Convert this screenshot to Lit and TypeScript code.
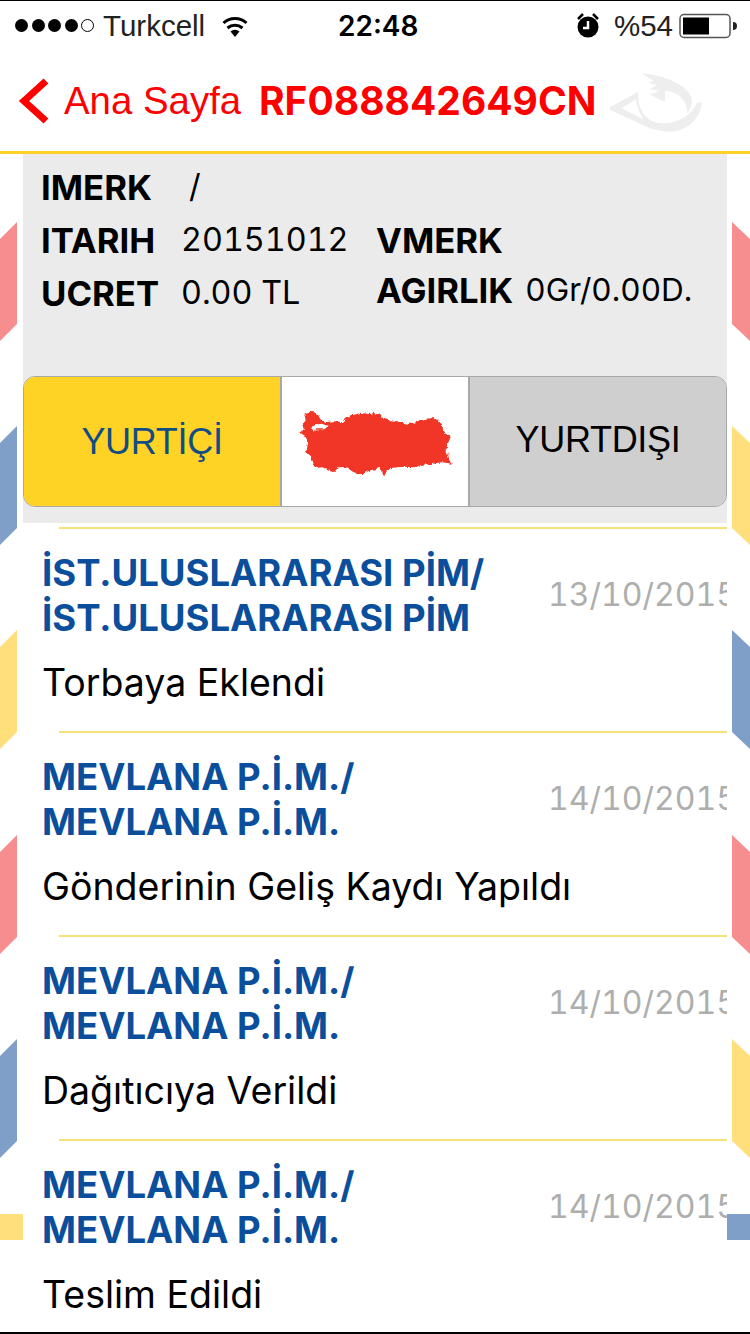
import { LitElement, html, css, svg } from "lit";
import { customElement } from "lit/decorators.js";

const RED = "#f68e8f", BLUE = "#7f9fc8", YEL = "#fedf7b";
const stripes = (x0: number, x1: number, colors: string[], rising: boolean) =>
  [222, 426, 630, 835, 1039].map((y, i) => {
    const a = rising ? y + 17 : y;
    const b = rising ? y : y + 17;
    return svg`<polygon fill=${colors[i]} points="${x0},${a} ${x1},${b} ${x1},${b + 102} ${x0},${a + 102}"></polygon>`;
  });

const rows = [
  ["İST.ULUSLARARASI PİM/", "İST.ULUSLARARASI PİM", "13/10/2015", "Torbaya Eklendi"],
  ["MEVLANA P.İ.M./", "MEVLANA P.İ.M.", "14/10/2015", "Gönderinin Geliş Kaydı Yapıldı"],
  ["MEVLANA P.İ.M./", "MEVLANA P.İ.M.", "14/10/2015", "Dağıtıcıya Verildi"],
  ["MEVLANA P.İ.M./", "MEVLANA P.İ.M.", "14/10/2015", "Teslim Edildi"],
];

@customElement("app-root")
export class AppRoot extends LitElement {
  static styles = css`
    :host { display: block; width: 750px; height: 1334px; position: relative; overflow: hidden; background: #fff; font-family: Inter, "Liberation Sans", sans-serif; color: #000; box-sizing: border-box; border-top: 1px solid #000; border-bottom: 2px solid #000; }
    .bg { position: absolute; left: 0; top: -1px; width: 750px; height: 1334px; }
    .content { position: relative; display: flex; flex-direction: column; height: 100%; }
    .content > * { flex: none; }
    .status { height: 49px; display: flex; align-items: center; padding: 0 13px 0 15px; font-family: "Liberation Sans", sans-serif; font-size: 29.500px; position: relative; }
    .dots { display: flex; gap: 3.500px; align-items: center; margin-right: 9px; }
    .dot { width: 13px; height: 13px; border-radius: 50%; background: #000; box-sizing: border-box; }
    .dot.off { background: transparent; border: 1.500px solid #000; }
    .carrier { color: #222; width: 118px; }
    .time { position: absolute; left: 338px; font-family: Inter, sans-serif; font-weight: 600; font-size: 28px; }
    .right { margin-left: auto; display: flex; align-items: center; gap: 14px; }
    .pct { color: #222; margin-right: -8px; }
    .nav { height: 101px; display: flex; align-items: center; padding-left: 18px; color: #fe0000; border-bottom: 3px solid #fad326; }
    .ana { font-family: "Liberation Sans", sans-serif; font-size: 38.400px; margin-left: 14px; width: 195px; white-space: nowrap; }
    .code { font-family: Inter, sans-serif; font-weight: 700; font-size: 39px; white-space: nowrap; width: 341px; }
    .logo { margin-top: -2px; }
    .panel { margin: 0 23px; height: 369px; background: #ebebeb; box-sizing: border-box; padding-top: 6px; display: flex; flex-direction: column; }
    .info { display: grid; grid-template-columns: 335px 1fr; height: 216px; padding-left: 18px; font-size: 32.300px; font-feature-settings: "tnum"; }
    .col { display: flex; flex-direction: column; }
    .line { height: 53px; display: flex; align-items: center; white-space: nowrap; }
    .rcol { padding-top: 53px; }
    .rcol .line:last-child { height: 47px; }
    b { font-weight: 700; font-size: 34.700px; }
    .k1 { width: 140px; }
    .small { font-size: 31.500px; margin-left: 12px; }
    .slash { margin-left: 8px; }
    .seg { height: 131px; flex: none; display: flex; border: 1px solid #a8a8a8; border-radius: 12px; overflow: hidden; box-sizing: border-box; font-family: "Liberation Sans", sans-serif; font-size: 36px; letter-spacing: -0.300px; }
    .seg > div { display: flex; align-items: center; justify-content: center; }
    .yt { width: 258px; background: #ffd226; color: #114d85; border-right: 2px solid #a8a8a8; box-sizing: border-box; }
    .map { width: 186px; background: #fff; box-sizing: border-box; padding-left: 2px; }
    .map svg { flex: none; }
    .yd { flex: 1; background: #cfcfcf; color: #000; border-left: 2px solid #a8a8a8; padding-bottom: 4px; }
    .list { margin: 4px 23px 0; display: flex; flex-direction: column; }
    .row { height: 204px; flex: none; box-sizing: border-box; background: #fff; position: relative; padding: 24px 0 0 19px; }
    .row::before { content: ""; position: absolute; left: 36px; right: 0; top: 0; height: 2px; background: #f5e07a; }
    .top { display: flex; align-items: center; justify-content: space-between; }
    .place { font-weight: 700; font-size: 36.500px; line-height: 45px; color: #0b4f9c; white-space: nowrap; }
    .date { font-size: 32px; font-feature-settings: "tnum"; color: #aeaeae; width: 179px; margin-top: -4px; overflow: hidden; white-space: nowrap; flex: none; }
    .event { font-size: 37.500px; line-height: 44px; margin-top: 20px; white-space: nowrap; }
  `;

  render() {
    return html`
      <svg class="bg" viewBox="0 0 750 1334" aria-hidden="true">
        ${stripes(0, 17, [RED, BLUE, YEL, RED, BLUE], true)}
        ${stripes(732, 750, [RED, YEL, BLUE, RED, YEL], false)}
        <rect x="0" y="1214" width="23" height="26" fill=${YEL}></rect>
        <rect x="727" y="1214" width="23" height="26" fill=${BLUE}></rect>
      </svg>
      <div class="content">
        <div class="status">
          <div class="dots"><span class="dot"></span><span class="dot"></span><span class="dot"></span><span class="dot"></span><span class="dot off"></span></div>
          <span class="carrier">Turkcell</span>
          <svg width="28" height="24" viewBox="0 0 28 24"><path d="M14 23 L9.500 17.500 a7 7 0 0 1 9 0Z" fill="#000"/><path d="M6.500 14 a11.500 11.500 0 0 1 15 0 M2.500 9 a17 17 0 0 1 23 0" fill="none" stroke="#000" stroke-width="3"/></svg>
          <span class="time">22:48</span>
          <div class="right">
            <svg width="24" height="26" viewBox="0 0 24 26"><circle cx="12" cy="14" r="10.500" fill="#000"/><path d="M12 8v7h-5" fill="none" stroke="#fff" stroke-width="2.500"/><path d="M2 6 L7 1 M22 6 L17 1" stroke="#000" stroke-width="2.500"/></svg>
            <span class="pct">%54</span>
            <svg width="58" height="26" viewBox="0 0 58 26"><rect x="1" y="1.500" width="50" height="23" rx="4" fill="none" stroke="#555" stroke-width="1.500"/><rect x="4" y="4.500" width="26" height="17" fill="#000"/><path d="M54 9 a4 4 0 0 1 0 8Z" fill="#222"/></svg>
          </div>
        </div>
        <div class="nav">
          <svg width="32" height="48" viewBox="0 0 32 48"><path d="M28 4 L6 24 L28 44" fill="none" stroke="#fe0000" stroke-width="7"/></svg>
          <span class="ana">Ana Sayfa</span>
          <span class="code">RF088842649CN</span>
          <svg class="logo" width="120" height="80" viewBox="0 0 360 240">
            <path fill="#eeeeee" d="M125 40 C190 45 265 75 275 115 C278 135 270 150 262 160 C262 120 235 95 195 92 L195 125 L150 104 L178 92 L148 88 L172 75 L145 68 L160 62 Z"/>
            <path fill="#eeeeee" fill-rule="evenodd" d="M30 142 L115 95 C112 140 130 185 185 190 C235 192 275 165 290 130 L305 125 C305 175 260 215 205 215 C190 215 170 210 150 205 L30 150 Z M65 145 L108 118 C110 140 118 160 130 178 Z"/>
          </svg>
        </div>
        <div class="panel">
          <div class="info">
            <div class="col">
              <div class="line"><b class="k1">IMERK</b><span class="slash">/</span></div>
              <div class="line"><b class="k1">ITARIH</b><span>20151012</span></div>
              <div class="line"><b class="k1">UCRET</b><span>0.00 TL</span></div>
            </div>
            <div class="col rcol">
              <div class="line"><b>VMERK</b></div>
              <div class="line"><b>AGIRLIK</b><span class="small">0Gr/0.00D.</span></div>
            </div>
          </div>
          <div class="seg">
            <div class="yt">YURTİÇİ</div>
            <div class="map">
              <svg width="190" height="100" viewBox="0 0 570 300">
                <defs><filter id="rough" x="-5%" y="-5%" width="110%" height="110%"><feTurbulence type="fractalNoise" baseFrequency="0.08" numOctaves="2" seed="3"/><feDisplacementMap in="SourceGraphic" scale="14" xChannelSelector="R" yChannelSelector="G"/></filter></defs>
                <path filter="url(#rough)" fill="#f13525" fill-rule="evenodd" d="M70 65 L85 60 L100 61 L112 70 L118 82 L135 90 L160 88 L185 91 L198 78 L215 70 L240 62 L262 66 L280 62 L298 70 L305 78 L330 88 L360 92 L385 96 L410 88 L430 80 L465 78 L478 92 L485 108 L490 125 L511 130 L505 145 L498 160 L497 178 L502 195 L512 215 L485 211 L450 216 L425 218 L400 226 L370 224 L350 226 L330 228 L318 236 L310 252 L302 246 L300 228 L280 232 L265 236 L245 246 L225 246 L208 234 L195 226 L172 226 L160 240 L145 238 L125 226 L102 228 L95 208 L88 195 L75 178 L82 150 L72 132 L58 122 L72 112 L66 100 L74 85Z M88 106 L105 98 L122 95 L142 102 L130 112 L110 112 L98 116Z"/>
              </svg>
            </div>
            <div class="yd">YURTDIŞI</div>
          </div>
        </div>
        <div class="list">
          ${rows.map(r => html`
            <div class="row">
              <div class="top">
                <div class="place">${r[0]}<br>${r[1]}</div>
                <div class="date">${r[2]}</div>
              </div>
              <div class="event">${r[3]}</div>
            </div>`)}
        </div>
      </div>
    `;
  }
}
